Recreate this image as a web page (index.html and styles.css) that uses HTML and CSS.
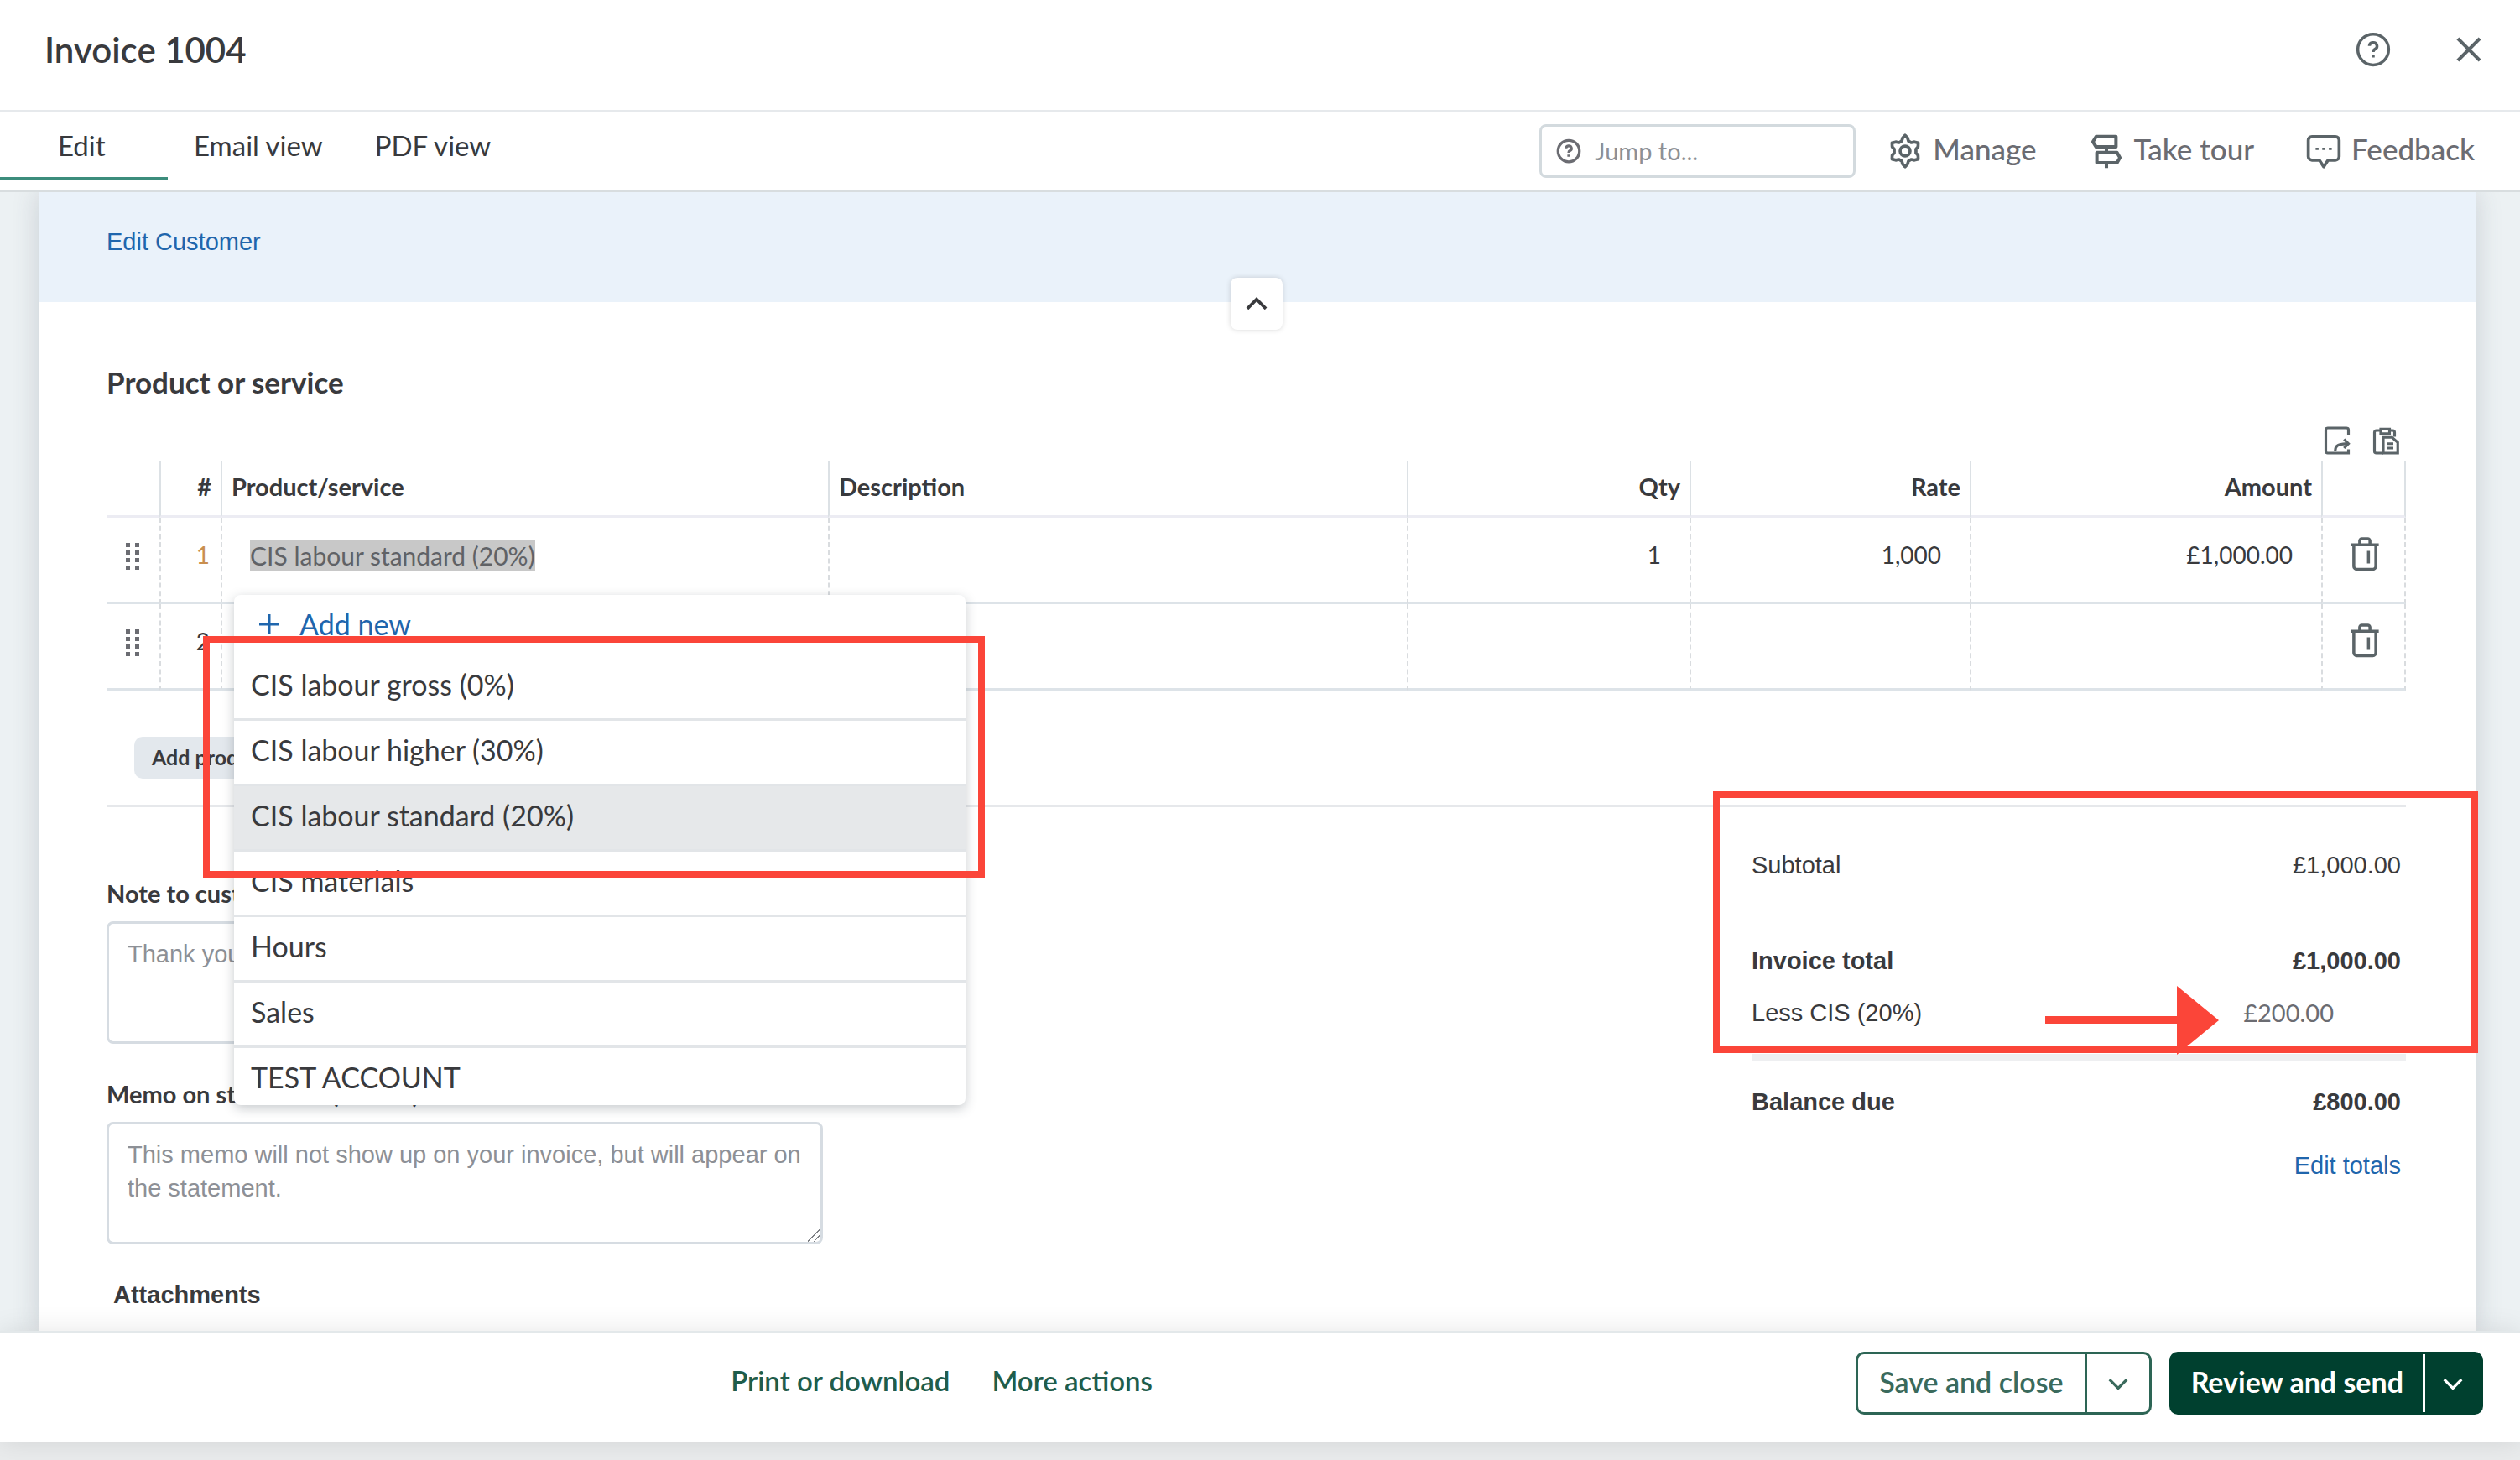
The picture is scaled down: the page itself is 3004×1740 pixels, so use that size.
FILE: index.html
```html
<!DOCTYPE html>
<html lang="en">
<head>
    <meta charset="UTF-8">
    <meta name="viewport" content="width=device-width, initial-scale=1.0">
    <title>Invoice 1004</title>
    <link rel="stylesheet" href="styles.css">
</head>
<body>
    <header class="titlebar">
        <h1>Invoice 1004</h1>
        <div class="titlebar-actions">
            <button class="icon-btn" aria-label="Help">
                <svg width="42" height="42" viewBox="0 0 24 24" fill="none" stroke="currentColor" stroke-width="2">
                    <circle cx="12" cy="12" r="10.5" />
                    <path d="M9.4 9.6a2.6 2.4 0 1 1 3.8 2.2c-.8.4-1.2.9-1.2 1.9M12 15.6v1.8" />
                </svg>
            </button>
            <button class="icon-btn" aria-label="Close">
                <svg width="42" height="42" viewBox="0 0 24 24" fill="none" stroke="currentColor" stroke-width="2.4">
                    <path d="M4.5 4.5l15 15M19.5 4.5l-15 15" />
                </svg>
            </button>
        </div>
    </header>

    <nav class="toolbar">
        <div class="tabs">
            <a href="#edit" class="tab active">Edit</a>
            <a href="#email" class="tab">Email view</a>
            <a href="#pdf" class="tab">PDF view</a>
        </div>
        <div class="tools">
            <label class="jump">
                <svg width="30" height="30" viewBox="0 0 24 24" fill="none" stroke="currentColor" stroke-width="2.6">
                    <circle cx="12" cy="12" r="10.2" />
                    <path d="M9.4 9.4a2.6 2.4 0 1 1 3.8 2.2c-.8.4-1.2.9-1.2 1.9M12 15.4v2" />
                </svg>
                <input type="text" placeholder="Jump to..." aria-label="Jump to">
            </label>
            <button class="tool tool-manage">
                <svg width="42" height="42" viewBox="0 0 24 24" fill="none" stroke="currentColor" stroke-width="2.1" stroke-linejoin="round">
                    <path d="M10.3 3.2 12 1.3l1.7 1.9.6 2 2 1.1 2.1-.5 2.5.7-.1 2.6-1.4 1.6v2.6l1.4 1.6.1 2.6-2.5.7-2.1-.5-2 1.1-.6 2-1.7 1.9-1.7-1.9-.6-2-2-1.1-2.1.5-2.5-.7.1-2.6 1.4-1.6v-2.6L3.2 9.1l-.1-2.6 2.5-.7 2.1.5 2-1.1z" />
                    <circle cx="12" cy="12" r="3.4" />
                </svg>
                <span>Manage</span>
            </button>
            <button class="tool tool-tour">
                <svg width="42" height="42" viewBox="0 0 24 24" fill="none" stroke="currentColor" stroke-width="2.3" stroke-linejoin="round">
                    <path d="M5 2.2h13.5v7H5L2.8 5.700zM5.500 13h13.700l2 3.500-2 3.500H5.500zM12 9.200V13M12 20v3.500" />
                </svg>
                <span>Take tour</span>
            </button>
            <button class="tool">
                <svg width="42" height="42" viewBox="0 0 24 24" fill="none" stroke="currentColor" stroke-width="2.1" stroke-linejoin="round">
                    <path d="M4 2.200h16a2.500 2.500 0 0 1 2.500 2.500v11a2.500 2.500 0 0 1-2.500 2.500h-5l-3 4.500-3-4.500H4a2.500 2.500 0 0 1-2.500-2.500v-11A2.500 2.500 0 0 1 4 2.200z" />
                    <path d="M6.500 10.500h2M11 10.500h2M15.500 10.500h2" stroke-width="1.5" />
                </svg>
                <span>Feedback</span>
            </button>
        </div>
    </nav>

    <main class="page">
        <div class="card">
            <section class="customer">
                <a href="#customer">Edit Customer</a>
                <button class="collapse" aria-label="Collapse">
                    <svg width="28" height="28" viewBox="0 0 24 24" fill="none" stroke="currentColor" stroke-width="3.2">
                        <path d="M2.5 17 12 7.5l9.5 9.5" />
                    </svg>
                </button>
            </section>

            <div class="content">
                <h2>Product or service</h2>
                <div class="table-actions">
                    <button class="icon-btn" aria-label="Export lines">
                        <svg width="36" height="36" viewBox="0 0 24 24" fill="none" stroke="currentColor" stroke-width="2.1">
                            <path d="M21 8V3.500A1.500 1.500 0 0 0 19.500 2h-15A1.500 1.500 0 0 0 3 3.500v17A1.500 1.500 0 0 0 4.500 22H21v-3" />
                            <path d="M10.500 20c0-4 2.500-5.500 10-5.500M17.500 11l3.500 3.500-3.500 3.500" />
                        </svg>
                    </button>
                    <button class="icon-btn" aria-label="Paste lines">
                        <svg width="36" height="36" viewBox="0 0 24 24" fill="none" stroke="currentColor" stroke-width="2.1">
                            <path d="M10 22H4.500A1.500 1.500 0 0 1 3 20.500v-15A1.500 1.500 0 0 1 4.500 4H8M15 4h2.500A1.500 1.500 0 0 1 19 5.500V9" />
                            <path d="M8 2.800h7v3.700H8zM10 9.500h7l4.500 4V22H10zM13 14.500h5M13 18h5" />
                        </svg>
                    </button>
                </div>

                <table class="lines">
                    <thead>
                        <tr>
                            <th class="col-drag"></th>
                            <th class="col-num num">#</th>
                            <th class="col-product">Product/service</th>
                            <th>Description</th>
                            <th class="col-qty num">Qty</th>
                            <th class="col-rate num">Rate</th>
                            <th class="col-amount num">Amount</th>
                            <th class="col-delete"></th>
                        </tr>
                    </thead>
                    <tbody>
                        <tr>
                            <td class="drag">
                                <svg width="18" height="32" viewBox="0 0 18 32" fill="currentColor">
                                    <path d="M1 0h5v5H1zM12 0h5v5h-5zM1 9h5v5H1zM12 9h5v5h-5zM1 18h5v5H1zM12 18h5v5h-5zM1 27h5v5H1zM12 27h5v5h-5z" />
                                </svg>
                            </td>
                            <td class="index first">1</td>
                            <td class="product">
                                <input type="text" value="CIS labour standard (20%)" aria-label="Product or service">
                                <div class="menu">
                                    <button class="add-new">
                                        <svg width="24" height="24" viewBox="0 0 24 24" fill="none" stroke="currentColor" stroke-width="3">
                                            <path d="M12 0v24M0 12h24" />
                                        </svg>
                                        Add new
                                    </button>
                                    <ul role="listbox">
                                        <li role="option">CIS labour gross (0%)</li>
                                        <li role="option">CIS labour higher (30%)</li>
                                        <li role="option" class="selected" aria-selected="true">CIS labour standard (20%)</li>
                                        <li role="option">CIS materials</li>
                                        <li role="option">Hours</li>
                                        <li role="option">Sales</li>
                                        <li role="option">TEST ACCOUNT</li>
                                    </ul>
                                    <div class="highlight highlight-menu"></div>
                                </div>
                            </td>
                            <td></td>
                            <td class="value">1</td>
                            <td class="value">1,000</td>
                            <td class="value">£1,000.00</td>
                            <td class="delete">
                                <button class="icon-btn" aria-label="Delete line 1">
                                    <svg width="42" height="42" viewBox="0 0 24 24" fill="none" stroke="currentColor" stroke-width="2">
                                        <path d="M2.500 5.800h19M8.500 5.500V3.200a1.500 1.500 0 0 1 1.500-1.500h4a1.500 1.500 0 0 1 1.500 1.500v2.300M4.500 6v14.500A2 2 0 0 0 6.500 22.500h11a2 2 0 0 0 2-2V6M14.500 10v8.500" />
                                    </svg>
                                </button>
                            </td>
                        </tr>
                        <tr>
                            <td class="drag">
                                <svg width="18" height="32" viewBox="0 0 18 32" fill="currentColor">
                                    <path d="M1 0h5v5H1zM12 0h5v5h-5zM1 9h5v5H1zM12 9h5v5h-5zM1 18h5v5H1zM12 18h5v5h-5zM1 27h5v5H1zM12 27h5v5h-5z" />
                                </svg>
                            </td>
                            <td class="index">2</td>
                            <td></td>
                            <td></td>
                            <td></td>
                            <td></td>
                            <td></td>
                            <td class="delete">
                                <button class="icon-btn" aria-label="Delete line 2">
                                    <svg width="42" height="42" viewBox="0 0 24 24" fill="none" stroke="currentColor" stroke-width="2">
                                        <path d="M2.500 5.800h19M8.500 5.500V3.200a1.500 1.500 0 0 1 1.500-1.500h4a1.500 1.500 0 0 1 1.500 1.500v2.300M4.500 6v14.500A2 2 0 0 0 6.500 22.500h11a2 2 0 0 0 2-2V6M14.500 10v8.500" />
                                    </svg>
                                </button>
                            </td>
                        </tr>
                    </tbody>
                </table>

                <button class="add-line">Add product or service</button>

                <div class="summary">
                    <div class="notes">
                        <label for="note">Note to customer</label>
                        <textarea id="note" placeholder="Thank you for your business."></textarea>
                        <label for="memo">Memo on statement (hidden)</label>
                        <textarea id="memo" placeholder="This memo will not show up on your invoice, but will appear on the statement."></textarea>
                        <h3>Attachments</h3>
                    </div>

                    <div class="totals">
                        <div class="total-row subtotal"><span>Subtotal</span><span>£1,000.00</span></div>
                        <div class="total-row strong"><span>Invoice total</span><span>£1,000.00</span></div>
                        <div class="total-row cis">
                            <span>Less CIS (20%)</span>
                            <svg class="arrow" width="207" height="82" viewBox="0 0 207 82" fill="currentColor">
                                <path d="M0 36h157V0l50 41-50 41V45H0z" />
                            </svg>
                            <span class="deduction">£200.00</span>
                        </div>
                        <div class="total-row balance strong"><span>Balance due</span><span>£800.00</span></div>
                        <a href="#totals">Edit totals</a>
                        <div class="highlight highlight-totals"></div>
                    </div>
                </div>
            </div>
        </div>
    </main>

    <footer class="footer">
        <div class="footer-links">
            <button class="text-btn">Print or download</button>
            <button class="text-btn">More actions</button>
        </div>
        <div class="footer-actions">
            <div class="split">
                <button>Save and close</button>
                <button class="caret" aria-label="More save options">
                    <svg width="26" height="26" viewBox="0 0 24 24" fill="none" stroke="currentColor" stroke-width="3">
                        <path d="M2.500 7.500 12 17l9.500-9.500" />
                    </svg>
                </button>
            </div>
            <div class="split primary">
                <button>Review and send</button>
                <button class="caret" aria-label="More send options">
                    <svg width="26" height="26" viewBox="0 0 24 24" fill="none" stroke="currentColor" stroke-width="3">
                        <path d="M2.500 7.500 12 17l9.500-9.500" />
                    </svg>
                </button>
            </div>
        </div>
    </footer>
</body>
</html>
```
FILE: styles.css
```css
:root {
    --text: #393a3d;
    --muted: #6b6c72;
    --icon: #5b6468;
    --link: #1f66ad;
    --green: #00402f;
    --line: #dde3e8;
    --red: #fb4539;
    --sans: Arial, "Liberation Sans", sans-serif;
}

* {
    box-sizing: border-box;
    margin: 0;
    padding: 0;
}

body {
    display: flex;
    flex-direction: column;
    height: 100vh;
    padding-bottom: 22px;
    overflow: hidden;
    font-family: Lato, sans-serif;
    font-size: 34px;
    line-height: 40px;
    color: var(--text);
    background: #e9ebec;
}

button,
input,
textarea {
    font: inherit;
    color: inherit;
    background: none;
    border: none;
    outline: none;
}

button {
    cursor: pointer;
}

a {
    color: var(--link);
    text-decoration: none;
}

svg {
    display: block;
    flex: none;
}

.icon-btn {
    color: var(--icon);
}

/* Header */
.titlebar {
    display: flex;
    flex: none;
    align-items: center;
    justify-content: space-between;
    height: 134px;
    padding: 0 40px 14px 53px;
    background: white;
    border-bottom: 3px solid #e6e9ec;
}

h1 {
    font-size: 42px;
    font-weight: 600;
}

.titlebar-actions {
    display: flex;
    gap: 72px;
}

.toolbar {
    display: flex;
    flex: none;
    justify-content: space-between;
    height: 95px;
    padding-right: 54px;
    background: white;
    border-bottom: 3px solid #d8dddf;
}

.tabs {
    display: flex;
    align-items: flex-start;
    font-size: 33px;
}

.tab {
    height: 81px;
    padding: 19px 31px 0;
    color: var(--text);
}

.tab.active {
    width: 200px;
    padding-left: 69px;
    border-bottom: 4px solid #3c8d7c;
}

.tools {
    display: flex;
    align-items: center;
    font-size: 35px;
    color: var(--muted);
}

.jump {
    display: flex;
    align-items: center;
    gap: 16px;
    width: 377px;
    height: 64px;
    margin-right: 38px;
    padding: 0 17px;
    border: 3px solid #d3dade;
    border-radius: 8px;
}

.jump input {
    width: 100%;
    font-size: 29px;
}

::placeholder {
    color: #8d9096;
    opacity: 1;
}

.tool {
    display: flex;
    align-items: center;
    gap: 12px;
    font-weight: 500;
}

.tool span {
    padding-bottom: 6px;
}

.tool svg {
    color: var(--icon);
}

.tool-manage,
.tool-tour {
    margin-right: 62px;
}

/* Invoice */
.page {
    flex: 1;
    min-height: 0;
    padding: 0 53px 0 46px;
    overflow: hidden;
    background: #ecf1f3;
}

.card {
    height: 100%;
    background: white;
    box-shadow: 0 0 30px rgba(60, 70, 90, 0.2);
}

.customer {
    position: relative;
    height: 131px;
    padding: 39px 81px;
    font-family: var(--sans);
    font-size: 29px;
    background: #eaf2fa;
}

.collapse {
    position: absolute;
    bottom: -33px;
    left: 50%;
    display: flex;
    align-items: center;
    justify-content: center;
    width: 62px;
    height: 62px;
    margin-left: -32px;
    background: white;
    border-radius: 8px;
    box-shadow: 0 0 6px rgba(0, 0, 0, 0.16);
}

.content {
    padding: 73px 83px 0 81px;
}

h2 {
    font-size: 35px;
    font-weight: 700;
    line-height: 44px;
}

.table-actions {
    display: flex;
    justify-content: flex-end;
    gap: 22px;
    margin: 30px 6px 6px;
}

.lines {
    width: 100%;
    table-layout: fixed;
    border-spacing: 0;
    font-size: 28px;
}

.lines th {
    height: 68px;
    padding: 0 11px 4px;
    font-size: 29px;
    font-weight: 700;
    text-align: left;
    border-left: 2px solid #dce1e5;
    border-bottom: 3px solid #ececf3;
}

.lines td {
    height: 103px;
    border-left: 2px dashed #d9dcdf;
    border-bottom: 3px solid var(--line);
}

.lines th:first-child,
.lines td:first-child {
    border-left: none;
}

.lines th:last-child {
    border-right: 2px solid #dce1e5;
}

.lines td:last-child {
    border-right: 2px dashed #d9dcdf;
}

.lines .num {
    text-align: right;
}

.col-drag { width: 63px; }
.col-num { width: 73px; }
.col-product { width: 724px; }
.col-qty { width: 337px; }
.col-rate { width: 334px; }
.col-amount { width: 419px; }
.col-delete { width: 101px; }

.drag svg {
    margin: 0 auto 8px 22px;
    color: var(--muted);
}

.lines .index {
    padding: 0 13px 12px 0;
    text-align: right;
}

.index.first {
    color: #c98f4e;
}

.lines .product {
    position: relative;
    padding: 0 0 10px 33px;
}

.product input {
    display: block;
    field-sizing: content;
    height: 37px;
    font-size: 30px;
    color: #606266;
    background: #c8c8c8;
}

.lines .value {
    padding: 0 34px 12px 0;
    text-align: right;
}

.delete svg {
    margin: 0 auto 6px 29px;
}

/* Product menu */
.menu {
    position: absolute;
    top: 92px;
    left: 14px;
    z-index: 2;
    width: 872px;
    font-size: 34px;
    background: white;
    border-radius: 8px;
    box-shadow: 0 4px 14px rgba(40, 50, 60, 0.26);
}

.add-new {
    display: flex;
    align-items: center;
    gap: 24px;
    width: 100%;
    height: 72px;
    padding: 0 0 2px 30px;
    color: var(--link);
}

.menu ul {
    list-style: none;
}

.menu li {
    height: 78px;
    padding: 15px 20px;
    border-bottom: 3px solid #e2e5e8;
}

.menu li:last-child {
    height: 68px;
    border-bottom: none;
}

.menu .selected {
    background: #e6e8ea;
}

.highlight {
    position: absolute;
    border: 8px solid var(--red);
    pointer-events: none;
}

.highlight-menu {
    top: 49px;
    right: -23px;
    left: -37px;
    height: 288px;
}

.add-line {
    height: 50px;
    margin: 55px 0 31px 33px;
    padding: 0 21px 2px;
    font-size: 25px;
    font-weight: 700;
    background: #e3e8ed;
    border-radius: 10px;
}

/* Notes and totals */
.summary {
    display: flex;
    justify-content: space-between;
    border-top: 3px solid #e6e8eb;
    font-family: var(--sans);
    font-size: 29px;
}

.notes {
    width: 854px;
    padding-top: 83px;
}

.notes label {
    display: block;
    font-family: Lato, sans-serif;
    font-weight: 700;
}

.notes textarea {
    display: block;
    width: 100%;
    height: 146px;
    margin: 13px 0 40px;
    padding: 16px 22px;
    border: 3px solid #d6dce2;
    border-radius: 8px;
}

.notes textarea::-webkit-scrollbar {
    width: 26px;
}

.notes textarea::-webkit-resizer {
    background: linear-gradient(135deg, transparent 46%, #7d8084 46%, #7d8084 52%, transparent 52%, transparent 70%, #7d8084 70%, #7d8084 76%, transparent 76%);
}

h3 {
    padding-left: 8px;
    font-size: 29px;
}

.totals {
    position: relative;
    width: 780px;
    padding-top: 49px;
}

.total-row {
    display: flex;
    justify-content: space-between;
    padding-right: 6px;
}

.strong {
    font-weight: 700;
}

.subtotal {
    margin-bottom: 74px;
}

.cis {
    position: relative;
    margin: 22px 0 29px;
}

.arrow {
    position: absolute;
    right: 223px;
    bottom: -30px;
    z-index: 1;
    color: var(--red);
}

.deduction {
    padding-right: 80px;
    font-family: Lato, sans-serif;
    color: var(--muted);
}

.balance {
    margin-bottom: 36px;
    padding-top: 29px;
    border-top: 8px solid #eeeff1;
}

.totals a {
    display: block;
    padding-right: 6px;
    text-align: right;
}

.highlight-totals {
    top: -19px;
    right: -86px;
    left: -46px;
    height: 312px;
}

/* Footer */
.footer {
    position: relative;
    display: flex;
    flex: none;
    align-items: flex-start;
    justify-content: space-between;
    height: 132px;
    padding: 22px 44px 0 29%;
    color: var(--green);
    background: white;
    border-top: 3px solid #e3e8ea;
    box-shadow: 0 0 30px rgba(0, 0, 0, 0.1);
}

.footer-links {
    display: flex;
    gap: 50px;
    padding-top: 14px;
    font-size: 33px;
}

.text-btn {
    font-weight: 600;
    color: #1f5d4b;
}

.footer-actions {
    display: flex;
    gap: 21px;
}

.split {
    display: flex;
    height: 75px;
    border: 3px solid #2d6555;
    border-radius: 10px;
    overflow: hidden;
}

.split button {
    padding: 0 25px 4px;
    font-weight: 600;
    color: #3a6a5c;
}

.split .caret {
    padding: 0 24px;
    border-left: 3px solid #2d6555;
}

.primary {
    background: var(--green);
    border-color: var(--green);
}

.primary button {
    padding: 0 23px 4px;
    font-weight: 700;
    color: white;
}

.primary .caret {
    padding: 0 20px;
    border-left-color: white;
}
```
